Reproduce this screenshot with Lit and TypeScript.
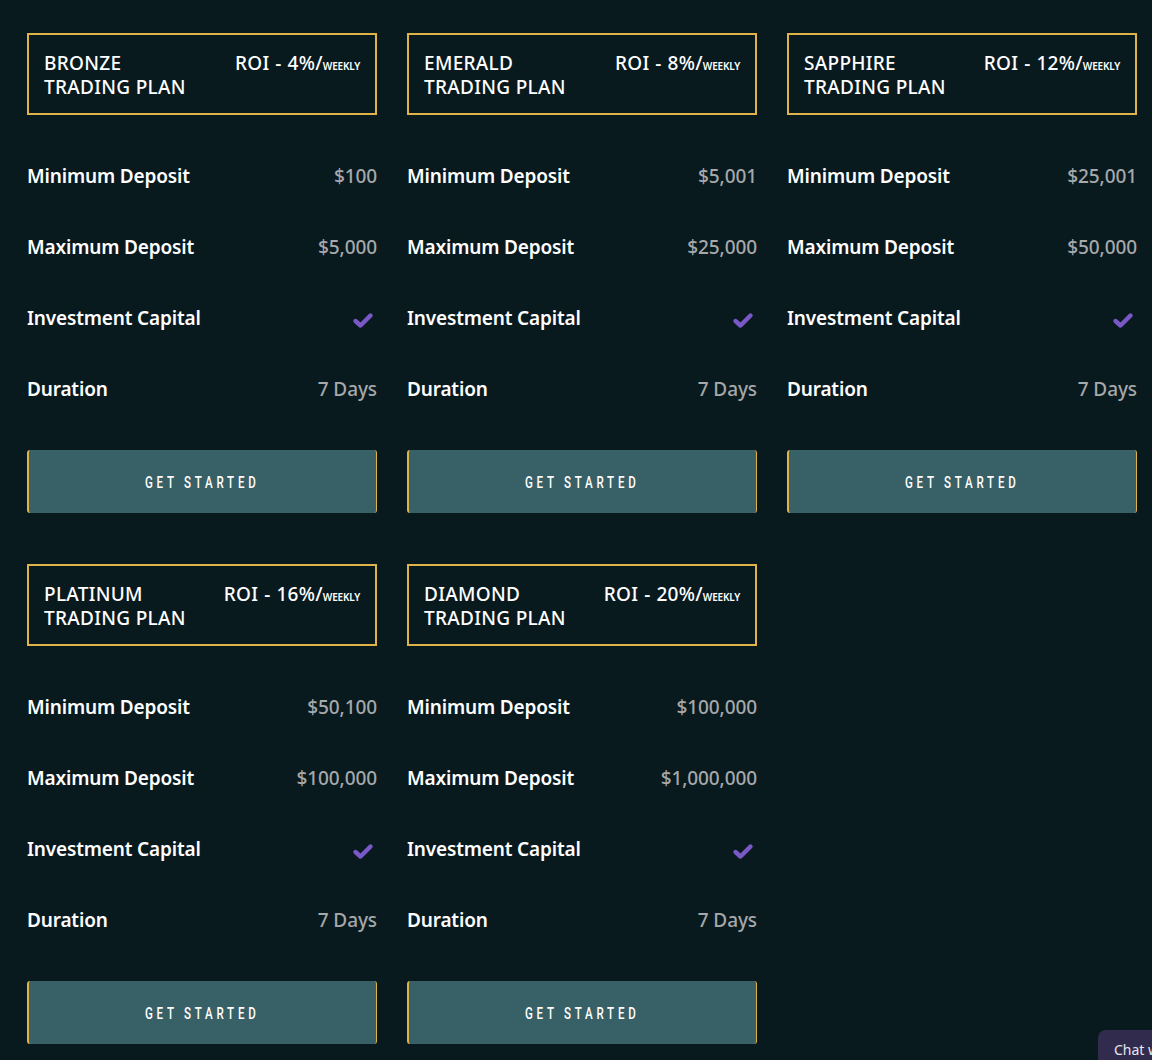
import { LitElement, html, css } from "lit";
import { customElement } from "lit/decorators.js";

interface Plan { name: string; roi: string; min: string; max: string; }
const PLANS: Plan[] = [
  { name: "BRONZE", roi: "4%", min: "$100", max: "$5,000" },
  { name: "EMERALD", roi: "8%", min: "$5,001", max: "$25,000" },
  { name: "SAPPHIRE", roi: "12%", min: "$25,001", max: "$50,000" },
  { name: "PLATINUM", roi: "16%", min: "$50,100", max: "$100,000" },
  { name: "DIAMOND", roi: "20%", min: "$100,000", max: "$1,000,000" },
];

@customElement("app-root")
export class AppRoot extends LitElement {
  static styles = css`
    :host {
      display: block;
      height: 1060px;
      overflow: hidden;
      position: relative;
      background: #091a1f;
      font-family: "Noto Sans", "Open Sans", sans-serif;
      color: #fff;
    }
    .grid {
      display: grid;
      grid-template-columns: repeat(3, 350px);
      column-gap: 30px;
      row-gap: 51px;
      padding: 33px 0 0 27px;
    }
    .head {
      box-sizing: border-box;
      height: 82px;
      border: 2px solid #dfb24a;
      padding: 16px 15px 0;
      display: flex;
      justify-content: space-between;
      font-size: 19px;
      letter-spacing: 0.3px;
      line-height: 24px;
      font-weight: 500;
    }
    .roi { white-space: nowrap; word-spacing: 0.6px; }
    .roi small { font-size: 10px; font-weight: 600; letter-spacing: -0.2px; }
    .rows { display: flex; flex-direction: column; padding-top: 26px; }
    .row {
      height: 71px;
      box-sizing: border-box;
      display: flex;
      justify-content: space-between;
      padding-top: 23px;
      line-height: 24px;
      font-size: 19px;
      font-weight: 600;
      letter-spacing: -0.16px;
    }
    .val { color: #a6a8aa; font-weight: 500; letter-spacing: -0.1px; }
    .check { width: 22px; height: 17px; margin: 6px 3px 0 0; }
    .btn {
      box-sizing: border-box;
      width: 100%;
      margin-top: 25px;
      height: 63px;
      background: #386067;
      border: 0;
      border-left: 2px solid #dfb24a;
      border-right: 1px solid #dfb24a;
      border-radius: 3px;
      color: #fff;
      display: flex;
      align-items: center;
      justify-content: center;
      font-family: "Roboto", sans-serif;
      font-size: 17px;
      font-weight: 500;
      letter-spacing: 5.5px;
      padding: 0;
    }
    .btn span { display: inline-block; transform: scaleX(0.68); white-space: nowrap; }
    .chat {
      position: absolute;
      left: 1098px;
      top: 1030px;
      width: 80px;
      height: 40px;
      box-sizing: border-box;
      padding: 10px 0 0 16px;
      background: #312c4d;
      border-radius: 8px 0 0 0;
      font-size: 14px;
      line-height: 19px;
      color: #e8e8ee;
      white-space: nowrap;
    }
  `;

  render() {
    const check = html`<svg class="check" viewBox="0 0 22 17" aria-hidden="true">
      <path d="M3.5 9 L8.5 13.5 L18.5 3.5" fill="none" stroke="#7a58c8" stroke-width="4.4" stroke-linecap="round" stroke-linejoin="round"></path>
    </svg>`;
    return html`
      <div class="grid">
        ${PLANS.map((p) => html`
          <section>
            <div class="head">
              <div>${p.name}<br />TRADING PLAN</div>
              <div class="roi">ROI - ${p.roi}/<small>WEEKLY</small></div>
            </div>
            <div class="rows">
              <div class="row"><span>Minimum Deposit</span><span class="val">${p.min}</span></div>
              <div class="row"><span>Maximum Deposit</span><span class="val">${p.max}</span></div>
              <div class="row"><span>Investment Capital</span>${check}</div>
              <div class="row"><span>Duration</span><span class="val">7 Days</span></div>
            </div>
            <button class="btn"><span>GET STARTED</span></button>
          </section>
        `)}
      </div>
      <div class="chat">Chat with us</div>
    `;
  }
}
